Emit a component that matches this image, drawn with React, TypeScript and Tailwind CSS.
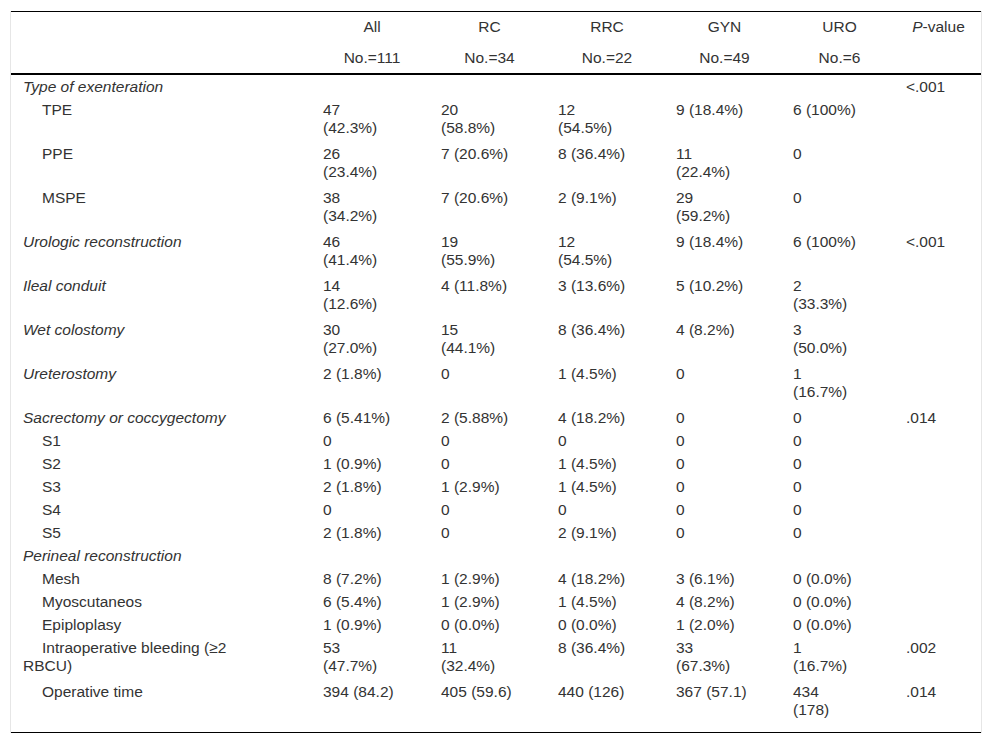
import React from "react";

type Row = {
  label: string;
  italic?: boolean;
  indent?: boolean;
  cells: string[];
  p: string;
};

const rows: Row[] = [
  { label: "Type of exenteration", italic: true, cells: ["", "", "", "", ""], p: "<.001" },
  { label: "TPE", indent: true, cells: ["47\n(42.3%)", "20\n(58.8%)", "12\n(54.5%)", "9 (18.4%)", "6 (100%)"], p: "" },
  { label: "PPE", indent: true, cells: ["26\n(23.4%)", "7 (20.6%)", "8 (36.4%)", "11\n(22.4%)", "0"], p: "" },
  { label: "MSPE", indent: true, cells: ["38\n(34.2%)", "7 (20.6%)", "2 (9.1%)", "29\n(59.2%)", "0"], p: "" },
  { label: "Urologic reconstruction", italic: true, cells: ["46\n(41.4%)", "19\n(55.9%)", "12\n(54.5%)", "9 (18.4%)", "6 (100%)"], p: "<.001" },
  { label: "Ileal conduit", italic: true, cells: ["14\n(12.6%)", "4 (11.8%)", "3 (13.6%)", "5 (10.2%)", "2\n(33.3%)"], p: "" },
  { label: "Wet colostomy", italic: true, cells: ["30\n(27.0%)", "15\n(44.1%)", "8 (36.4%)", "4 (8.2%)", "3\n(50.0%)"], p: "" },
  { label: "Ureterostomy", italic: true, cells: ["2 (1.8%)", "0", "1 (4.5%)", "0", "1\n(16.7%)"], p: "" },
  { label: "Sacrectomy or coccygectomy", italic: true, cells: ["6 (5.41%)", "2 (5.88%)", "4 (18.2%)", "0", "0"], p: ".014" },
  { label: "S1", indent: true, cells: ["0", "0", "0", "0", "0"], p: "" },
  { label: "S2", indent: true, cells: ["1 (0.9%)", "0", "1 (4.5%)", "0", "0"], p: "" },
  { label: "S3", indent: true, cells: ["2 (1.8%)", "1 (2.9%)", "1 (4.5%)", "0", "0"], p: "" },
  { label: "S4", indent: true, cells: ["0", "0", "0", "0", "0"], p: "" },
  { label: "S5", indent: true, cells: ["2 (1.8%)", "0", "2 (9.1%)", "0", "0"], p: "" },
  { label: "Perineal reconstruction", italic: true, cells: ["", "", "", "", ""], p: "" },
  { label: "Mesh", indent: true, cells: ["8 (7.2%)", "1 (2.9%)", "4 (18.2%)", "3 (6.1%)", "0 (0.0%)"], p: "" },
  { label: "Myoscutaneos", indent: true, cells: ["6 (5.4%)", "1 (2.9%)", "1 (4.5%)", "4 (8.2%)", "0 (0.0%)"], p: "" },
  { label: "Epiploplasy", indent: true, cells: ["1 (0.9%)", "0 (0.0%)", "0 (0.0%)", "1 (2.0%)", "0 (0.0%)"], p: "" },
  { label: "Intraoperative bleeding (≥2\nRBCU)", indent: true, cells: ["53\n(47.7%)", "11\n(32.4%)", "8 (36.4%)", "33\n(67.3%)", "1\n(16.7%)"], p: ".002" },
  { label: "Operative time", indent: true, cells: ["394 (84.2)", "405 (59.6)", "440 (126)", "367 (57.1)", "434\n(178)"], p: ".014" },
];

const cols = "grid grid-cols-[302px_118px_117px_118px_117px_113px_85px]";

export default function App() {
  return (
    <div className="w-[992px] h-[744px] bg-white font-['Liberation_Sans',Arial,sans-serif] text-[15.5px] leading-[18px] text-[#333]">
      <div className="pt-[11px] pl-[10px]">
        <div className="w-[972px] border-x border-[#e6e6e6]">
          <div className="border-t border-black border-b-2 border-b-black">
            <div className={`${cols} h-[30px] items-center`}>
              <div />
              <div className="text-center">All</div>
              <div className="text-center">RC</div>
              <div className="text-center">RRC</div>
              <div className="text-center">GYN</div>
              <div className="text-center">URO</div>
              <div className="text-center">
                <span className="italic">P</span>-value
              </div>
            </div>
            <div className={`${cols} h-[31px] items-center`}>
              <div />
              <div className="text-center">No.=111</div>
              <div className="text-center">No.=34</div>
              <div className="text-center">No.=22</div>
              <div className="text-center">No.=49</div>
              <div className="text-center">No.=6</div>
              <div />
            </div>
          </div>
          <div className="border-b border-black pb-[8px]">
            {rows.map((r, i) => {
              const double = r.label.includes("\n") || r.cells.some((c) => c.includes("\n"));
              return (
                <div key={i} className={`${cols} ${double ? "h-[44px]" : "h-[23px]"} pt-[3px]`}>
                  <div
                    className={`pl-[12px] whitespace-pre-line ${r.italic ? "italic" : ""} ${r.indent ? "indent-[19px]" : ""}`}
                  >
                    {r.label}
                  </div>
                  {r.cells.map((c, j) => (
                    <div key={j} className="pl-[10px] whitespace-pre-line">
                      {c}
                    </div>
                  ))}
                  <div className="pl-[10px]">{r.p}</div>
                </div>
              );
            })}
          </div>
        </div>
      </div>
    </div>
  );
}
